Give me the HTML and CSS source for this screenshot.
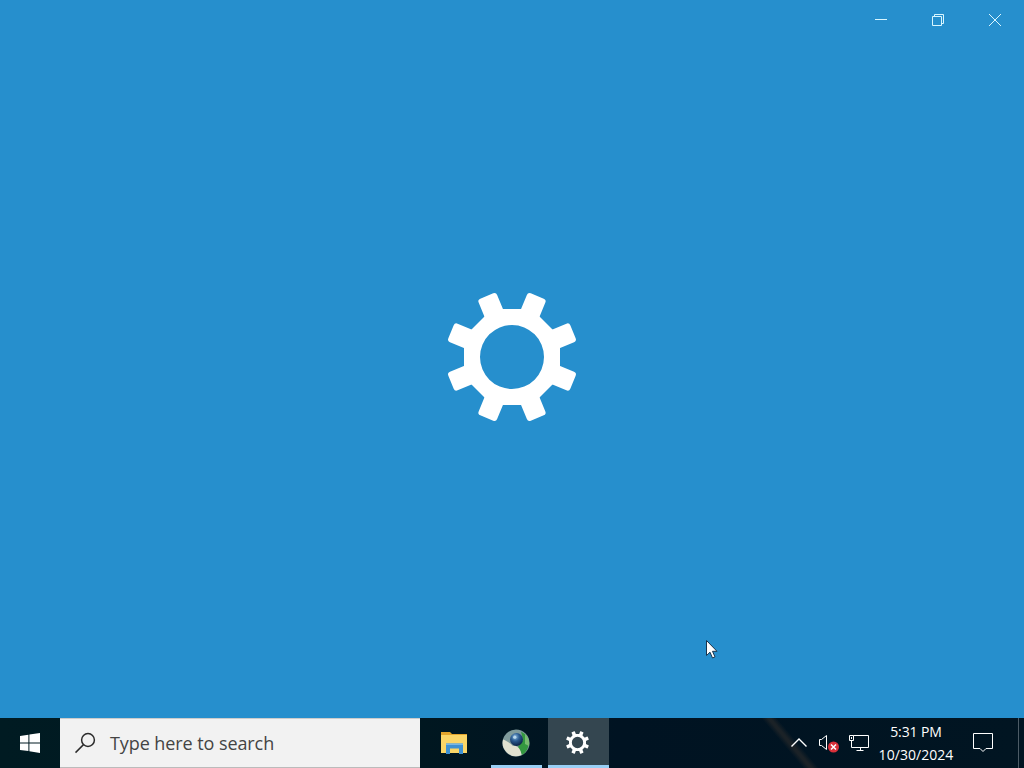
FILE: index.html
```html
<!DOCTYPE html>
<html lang="en">
<head>
  <meta charset="UTF-8">
  <title>Settings</title>
  <link rel="stylesheet" href="styles.css">
</head>
<body>

<!-- Shared gear symbol -->
<svg class="defs" width="0" height="0">
  <defs>
    <rect id="tooth" x="-10" y="-66" width="20" height="25" rx="3"/>
    <symbol id="gear" viewBox="-65 -65 130 130" overflow="visible">
      <path fill-rule="evenodd" d="M-20-48H20L48-20V20L20 48H-20L-48 20V-20ZM0-32A32 32 0 1 0 0 32A32 32 0 1 0 0-32Z"/>
      <use href="#tooth" transform="rotate(22.5)"/>
      <use href="#tooth" transform="rotate(67.5)"/>
      <use href="#tooth" transform="rotate(112.5)"/>
      <use href="#tooth" transform="rotate(157.5)"/>
      <use href="#tooth" transform="rotate(202.5)"/>
      <use href="#tooth" transform="rotate(247.5)"/>
      <use href="#tooth" transform="rotate(292.5)"/>
      <use href="#tooth" transform="rotate(337.5)"/>
    </symbol>
  </defs>
</svg>

<div class="desktop">
  <!-- Settings splash -->
  <main class="window">
    <div class="controls">
      <button aria-label="Minimize"><svg width="14" height="14"><path d="M1 6.5H13"/></svg></button>
      <button aria-label="Restore"><svg width="14" height="14"><path d="M1.5 3.5h9v9h-9zM3.5 3.5v-2h9v9h-2"/></svg></button>
      <button aria-label="Close"><svg width="14" height="14"><path d="M1 1L13 13M13 1L1 13"/></svg></button>
    </div>
    <svg class="splash" width="130" height="130"><use href="#gear"/></svg>
  </main>

  <!-- Taskbar -->
  <footer class="taskbar">
    <button class="start" aria-label="Start">
      <svg width="20" height="20" fill="#fff"><path d="M0 3L8.4 1.8V9.4H0zM9.4 1.6L20 0V9.4H9.4zM0 10.4H8.4V18L0 16.9zM9.4 10.4H20V20L9.4 18.3z"/></svg>
    </button>
    <div class="search">
      <svg width="22" height="22" fill="none" stroke="#2b2b2b" stroke-width="1.5"><circle cx="13" cy="8" r="6.4"/><path d="M8.500 12.600L.5 20.600"/></svg>
      <span>Type here to search</span>
    </div>

    <div class="apps">
      <div class="app">
        <svg width="28" height="24">
          <path fill="#e3a52c" d="M1 1h9l2 2h15v5H1z"/>
          <path fill="#fbd667" d="M1 4h26v18H1z"/>
          <path fill="#3f91d2" d="M6 12.5h17V23h-4v-5.5h-9V23H6z"/>
          <path fill="#78b7e5" d="M6 12.5h17v1.5H6z"/>
        </svg>
      </div>
      <div class="app running">
        <svg width="28" height="28">
          <defs>
            <radialGradient id="ball" cx=".4" cy=".3" r=".7">
              <stop offset="0" stop-color="#8bbbe0"/>
              <stop offset=".45" stop-color="#2b5c92"/>
              <stop offset="1" stop-color="#0b2447"/>
            </radialGradient>
          </defs>
          <circle cx="14" cy="14" r="13.5" fill="#7f9b9c"/>
          <path fill="#349840" d="M19 2.5A13.5 13.5 0 0 1 20 26L16 18L21 11z"/>
          <path fill="#78bd70" d="M23 5A13.5 13.5 0 0 1 27 17L23 15z"/>
          <path fill="#e1e1d0" d="M1 10.5C5 12 8 14 11 17C15 16 19 20 19.5 26A13.5 13.5 0 0 1 1 10.5z"/>
          <circle cx="14.500" cy="10.500" r="6.500" fill="url(#ball)"/>
          <circle cx="12.800" cy="8.200" r="1.600" fill="#b9d8ed"/>
        </svg>
      </div>
      <div class="app running active">
        <svg width="23" height="23" fill="#fff"><use href="#gear"/></svg>
      </div>
    </div>

    <div class="tray">
      <svg class="chevron" width="18" height="12"><path d="M1.5 9.5L9 2L16.5 9.5"/></svg>
      <svg class="volume" width="21" height="20">
        <path d="M1.5 6.500h2L8.500 2.500v14L3.500 12.500h-2z"/>
        <circle cx="15.500" cy="14" r="5.500" fill="#d9303a" stroke="none"/>
        <path stroke-width="1.500" d="M13 11.500l5 5M18 11.500l-5 5"/>
      </svg>
      <svg class="network" width="22" height="18"><path d="M5.5 1.5h15v12H3.5V7M1.5 1.5h4v5h-4zM3.5 3v2M12.5 13.5v3M8.5 16.5h7"/></svg>
      <div class="clock">
        <span class="time">5:31 PM</span>
        <span class="date">10/30/2024</span>
      </div>
      <svg class="notes" width="22" height="22"><path d="M1.5 1.5h19v15H14l-3 3l-3-3H1.5z"/></svg>
      <div class="peek"></div>
    </div>
  </footer>

  <svg class="cursor" width="14" height="21"><path d="M1.5 1.5V16.5L5 13.2L7.5 19L10 17.9L7.5 12.3H12z"/></svg>
</div>

</body>
</html>
```
FILE: styles.css
```css
* {
  box-sizing: border-box;
}
body {
  margin: 0;
  overflow: hidden;
  font-family: "Open Sans", "Noto Sans", sans-serif;
}
button {
  border: none;
  padding: 0;
  background: none;
}
svg {
  display: block;
  flex: none;
}
.defs {
  position: absolute;
}
.desktop {
  position: relative;
  display: flex;
  flex-direction: column;
  width: 1024px;
  height: 768px;
}

/* Settings window */
.window {
  flex: 1;
  display: flex;
  flex-direction: column;
  align-items: center;
  background: #268fcd;
}
.controls {
  display: flex;
  align-self: flex-end;
  height: 40px;
  padding-right: 1px;
}
.controls button {
  display: flex;
  align-items: center;
  justify-content: center;
  width: 57px;
}
.controls svg {
  fill: none;
  stroke: #d8f6ff;
}
.splash {
  margin-top: 252px;
  fill: #fff;
}

/* Taskbar */
.taskbar {
  display: flex;
  height: 50px;
  color: #fff;
  background: linear-gradient(90deg, #001b22 0, #001720 420px, #001322 620px, #011522 100%);
}
.start {
  display: flex;
  align-items: center;
  justify-content: center;
  width: 60px;
}
.search {
  display: flex;
  align-items: center;
  width: 360px;
  padding-left: 15px;
  background: #f2f2f2;
  border-top: 1px solid #ccc;
  border-bottom: 1px solid #bbb;
}
.search span {
  margin-left: 13px;
  color: #444;
  font-size: 18px;
  letter-spacing: -0.08px;
  white-space: nowrap;
}
.apps {
  display: flex;
  padding-left: 4px;
}
.app {
  display: flex;
  align-items: center;
  justify-content: center;
  width: 60px;
  height: 50px;
}
.app.running {
  width: 51px;
  margin: 0 6px 0 7px;
  border-bottom: 3px solid #99cff5;
  padding: 3px 1px 0 0;
}
.app.active {
  width: 61px;
  margin: 0;
  padding: 2px 2px 0 0;
  background: #344650;
}

/* Tray */
.tray {
  display: flex;
  align-items: center;
  flex: 1;
  padding-left: 181px;
  background: linear-gradient(50deg, transparent 44%, #1b2227 49%, #1b2227 51%, transparent 56%) 136px 0 / 90px 50px no-repeat;
}
.tray svg {
  fill: none;
  stroke: #fff;
}
.tray .chevron {
  stroke-width: 1.4;
}
.volume {
  margin-left: 10px;
}
.network {
  margin-left: 9px;
}
.clock {
  display: flex;
  flex-direction: column;
  align-items: center;
  width: 76px;
  margin-left: 8px;
  font-size: 14px;
  line-height: 23px;
  white-space: nowrap;
}
.time {
  letter-spacing: -0.1px;
}
.date {
  letter-spacing: 0.05px;
}
.notes {
  margin-left: 18px;
}
.peek {
  align-self: stretch;
  width: 6px;
  margin-left: auto;
  border-left: 1px solid #4c5b66;
}

/* Mouse pointer */
.cursor {
  position: absolute;
  left: 705px;
  top: 639px;
  fill: #fff;
  stroke: #17344d;
}
```
